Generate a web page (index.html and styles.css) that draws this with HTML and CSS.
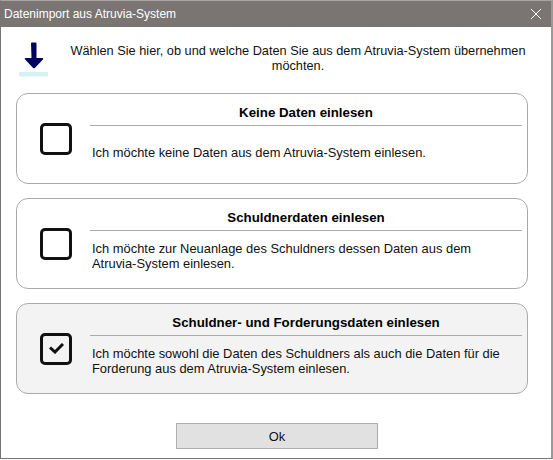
FILE: index.html
```html
<!DOCTYPE html>
<html lang="de">
    <head>
        <meta charset="UTF-8">
        <meta name="viewport" content="width=device-width, initial-scale=1.0">
        <title>Datenimport aus Atruvia-System</title>
        <link rel="stylesheet" href="styles.css">
    </head>
    <body>
        <div class="dialog">
            <div class="titlebar">
                <span class="titlebar-text">Datenimport aus Atruvia-System</span>
                <svg class="close-icon" width="10" height="10" viewBox="0 0 10 10">
                    <path d="M0 0L10 10M10 0L0 10" stroke="#fff" stroke-width="1" fill="none"/>
                </svg>
            </div>
            <div class="intro">
                <svg class="intro-icon" width="30" height="35" viewBox="0 0 30 35">
                    <path d="M12 1.500a1 1 0 0 1 1-1h3.500a1 1 0 0 1 1 1v14.500h6a.8.8 0 0 1 .6 1.300l-8 8.400a1.500 1.500 0 0 1-2.200 0l-8-8.400a.8.8 0 0 1 .6-1.300h6z" fill="#000060"/>
                    <rect x="0" y="30" width="29" height="4.500" rx="1" fill="#d5f1f5"/>
                </svg>
                <p class="intro-text">Wählen Sie hier, ob und welche Daten Sie aus dem Atruvia-System übernehmen möchten.</p>
            </div>
            <div class="card">
                <div class="check"></div>
                <div class="card-body">
                    <div class="card-title">Keine Daten einlesen</div>
                    <div class="card-text card-text-single">Ich möchte keine Daten aus dem Atruvia-System einlesen.</div>
                </div>
            </div>
            <div class="card">
                <div class="check"></div>
                <div class="card-body">
                    <div class="card-title">Schuldnerdaten einlesen</div>
                    <div class="card-text">Ich möchte zur Neuanlage des Schuldners dessen Daten aus dem<br>Atruvia-System einlesen.</div>
                </div>
            </div>
            <div class="card card-selected">
                <div class="check">
                    <svg width="15" height="11" viewBox="0 0 15 11">
                        <path d="M1 4.500l5 4.500 8-8" stroke="#111" stroke-width="3" fill="none"/>
                    </svg>
                </div>
                <div class="card-body">
                    <div class="card-title">Schuldner- und Forderungsdaten einlesen</div>
                    <div class="card-text">Ich möchte sowohl die Daten des Schuldners als auch die Daten für die<br>Forderung aus dem Atruvia-System einlesen.</div>
                </div>
            </div>
            <div class="actions">
                <button class="ok-button">Ok</button>
            </div>
        </div>
    </body>
</html>
```

FILE: styles.css
```css
body {
    margin: 0;
    background-color: #fff;
    font-family: "Liberation Sans", Arial, sans-serif;
    font-size: 12.9px;
    color: #111;
}
.dialog {
    width: 553px;
    height: 459px;
    box-sizing: border-box;
    border: 1px solid #7a7472;
    border-top: 1px solid #a9a5a3;
    border-right: 2px solid #999;
    box-shadow: 0 1px 0 #ccc;
    background-color: #fff;
}
.titlebar {
    height: 26px;
    background-color: #7a7472;
    color: #fff;
    font-size: 12px;
    display: flex;
    align-items: center;
    justify-content: space-between;
    padding: 0 10px 0 3px;
}
.intro {
    display: flex;
    align-items: flex-start;
    height: 66px;
    padding: 15px 0 0 18px;
    box-sizing: border-box;
}
.intro-icon {
    flex: none;
}
.intro-text {
    margin: 1px 0 0 19px;
    width: 460px;
    font-size: 12.75px;
    text-align: center;
    line-height: 15px;
}
.card {
    margin: 0 23px 14px 15px;
    height: 91px;
    box-sizing: border-box;
    border: 1px solid #aaa;
    border-radius: 12px;
    display: flex;
    align-items: center;
    background-color: #fff;
}
.card-selected {
    background-color: #f3f3f3;
}
.check {
    flex: none;
    width: 32px;
    height: 32px;
    box-sizing: border-box;
    margin: 0 18px 0 23px;
    border: 3px solid #111;
    border-radius: 5px;
    display: flex;
    align-items: center;
    justify-content: center;
}
.card-body {
    flex: 1;
    align-self: flex-start;
    margin-right: 5px;
}
.card-title {
    height: 31px;
    line-height: 38px;
    border-bottom: 1px solid #aaa;
    font-size: 13.3px;
    font-weight: bold;
    text-align: center;
    color: #000;
}
.card-text {
    padding: 10px 0 0 2px;
    line-height: 15px;
}
.card-text-single {
    padding-top: 19px;
}
.actions {
    display: flex;
    justify-content: center;
    padding: 15px 0 0 2px;
}
.ok-button {
    width: 202px;
    height: 26px;
    background-color: #e1e1e1;
    border: 1px solid #adadad;
    font: inherit;
    color: #111;
}
```
